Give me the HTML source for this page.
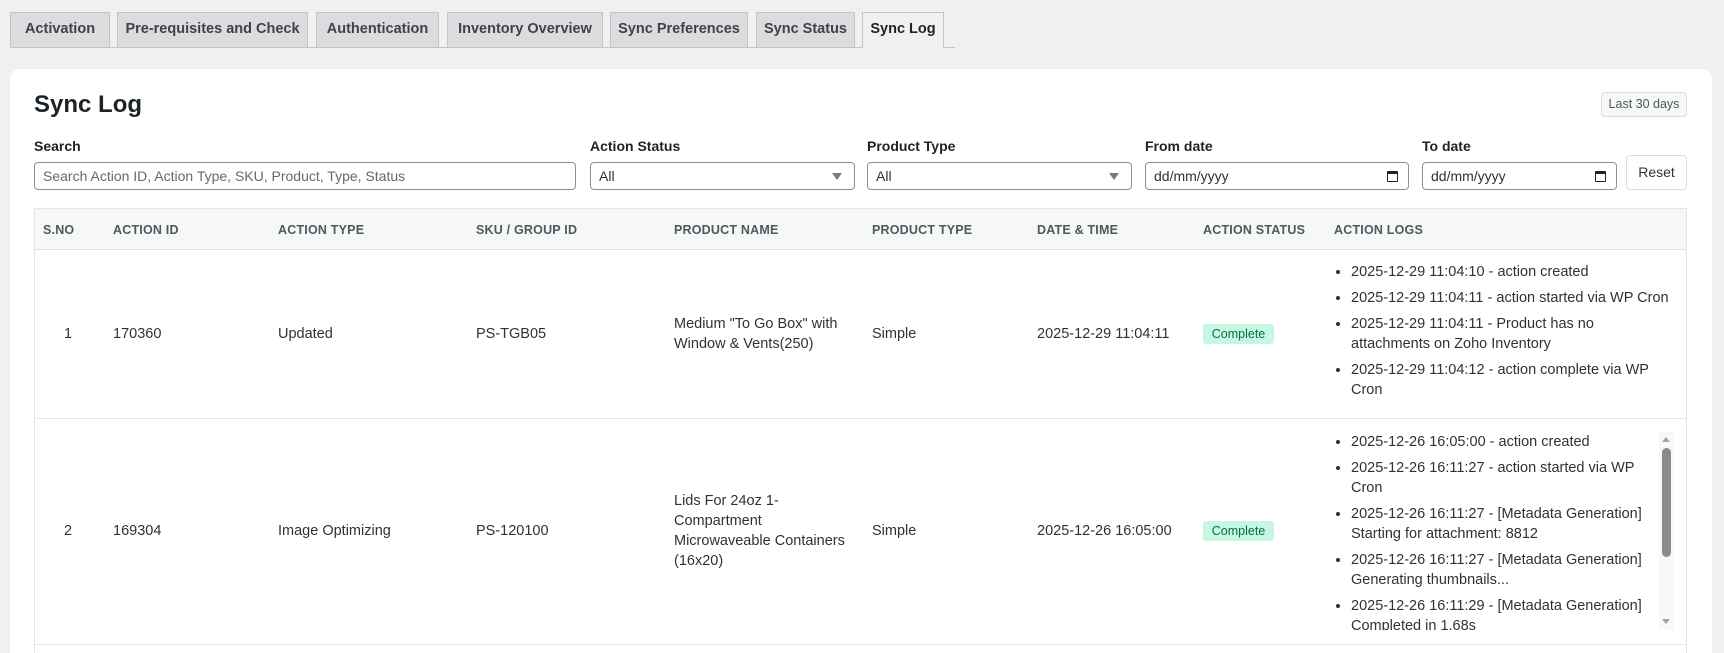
<!DOCTYPE html>
<html><head><meta charset="utf-8"><style>
*{box-sizing:border-box;margin:0;padding:0}
html,body{width:1724px;height:653px;overflow:hidden}
body{background:#f0f0f1;font-family:"Liberation Sans",sans-serif;color:#2c3338;position:relative}
.a{position:absolute}
.tab{position:absolute;top:12px;height:35px;background:#dcdcde;border:1px solid #c3c4c7;border-bottom:none;font-size:14.5px;font-weight:bold;color:#3c434a;line-height:33px;text-align:center}
.tab.on{background:#f0f0f1;color:#1d2327;height:36px}
.line{position:absolute;left:10px;width:945px;top:47px;border-top:1px solid #c3c4c7}
.card{position:absolute;left:10px;top:69px;width:1702px;height:584px;background:#fff;border-radius:10px 10px 0 0}
.lbl{position:absolute;top:138px;font-size:14px;font-weight:bold;color:#1d2327}
.inp{position:absolute;top:162px;height:28px;border:1px solid #8c8f94;border-radius:4px;font-size:14px;line-height:26px;padding-left:8px;color:#2c3338;background:#fff}
.arr{position:absolute;right:12px;top:10px;width:0;height:0;border-left:5px solid transparent;border-right:5px solid transparent;border-top:7px solid #7a7a7a}
.cal{position:absolute;right:10px;top:8px;width:11px;height:11px;border:1.5px solid #222;border-top-width:3px;border-radius:1px}
.th{position:absolute;top:223px;font-size:12.5px;font-weight:bold;color:#50575e;letter-spacing:.2px}
.td{position:absolute;font-size:14.5px;color:#2c3338;line-height:20px}
.badge{position:absolute;width:71px;height:20px;background:#c6f7e2;color:#0b6b47;border-radius:3px;font-size:12.5px;text-align:center;line-height:20px}
ul{list-style:none;position:absolute;left:1336px;font-size:14.5px;line-height:20px;color:#2c3338}
li{position:relative;padding-left:15px;margin-bottom:6px}
li:before{content:"";position:absolute;left:0;top:8px;width:4px;height:4px;border-radius:50%;background:#2c3338}
</style></head><body>
<div class="tab" style="left:10px;width:100px">Activation</div>
<div class="tab" style="left:117px;width:191px">Pre-requisites and Check</div>
<div class="tab" style="left:316px;width:123px">Authentication</div>
<div class="tab" style="left:447px;width:156px">Inventory Overview</div>
<div class="tab" style="left:610px;width:138px">Sync Preferences</div>
<div class="tab" style="left:756px;width:99px">Sync Status</div>
<div class="line"></div>
<div class="tab on" style="left:862px;width:82px">Sync Log</div>
<div class="card"></div>
<div class="a" style="left:34px;top:91px;font-size:24px;font-weight:bold;color:#1d2327">Sync Log</div>
<div class="a" style="left:1601px;top:92px;width:86px;height:25px;border:1px solid #dcdcde;border-radius:4px;background:#f6f7f7;font-size:12.5px;color:#50575e;text-align:center;line-height:23px">Last 30 days</div>
<div class="lbl" style="left:34px">Search</div>
<div class="lbl" style="left:590px">Action Status</div>
<div class="lbl" style="left:867px">Product Type</div>
<div class="lbl" style="left:1145px">From date</div>
<div class="lbl" style="left:1422px">To date</div>
<div class="inp" style="left:34px;width:542px;color:#646970">Search Action ID, Action Type, SKU, Product, Type, Status</div>
<div class="inp" style="left:590px;width:265px">All<span class="arr"></span></div>
<div class="inp" style="left:867px;width:265px">All<span class="arr"></span></div>
<div class="inp" style="left:1145px;width:264px">dd/mm/yyyy<span class="cal"></span></div>
<div class="inp" style="left:1422px;width:195px">dd/mm/yyyy<span class="cal"></span></div>
<div class="a" style="left:1626px;top:155px;width:61px;height:35px;border:1px solid #dcdcde;border-radius:4px;font-size:14px;text-align:center;line-height:33px;color:#2c3338">Reset</div>
<div class="a" style="left:34px;top:208px;width:1653px;height:445px;border:1px solid #e5e5e5;border-bottom:none"></div>
<div class="a" style="left:35px;top:209px;width:1651px;height:41px;background:#f6f7f7;border-bottom:1px solid #e2e4e7"></div>
<div class="th" style="left:43px">S.NO</div>
<div class="th" style="left:113px">ACTION ID</div>
<div class="th" style="left:278px">ACTION TYPE</div>
<div class="th" style="left:476px">SKU / GROUP ID</div>
<div class="th" style="left:674px">PRODUCT NAME</div>
<div class="th" style="left:872px">PRODUCT TYPE</div>
<div class="th" style="left:1037px">DATE &amp; TIME</div>
<div class="th" style="left:1203px">ACTION STATUS</div>
<div class="th" style="left:1334px">ACTION LOGS</div>
<div class="a" style="left:35px;top:418px;width:1651px;border-top:1px solid #e5e5e5"></div>
<div class="a" style="left:35px;top:644px;width:1651px;border-top:1px solid #e5e5e5"></div>
<div class="td" style="left:64px;top:324px">1</div>
<div class="td" style="left:113px;top:324px">170360</div>
<div class="td" style="left:278px;top:324px">Updated</div>
<div class="td" style="left:476px;top:324px">PS-TGB05</div>
<div class="td" style="left:674px;top:314px;width:180px">Medium "To Go Box" with Window &amp; Vents(250)</div>
<div class="td" style="left:872px;top:324px">Simple</div>
<div class="td" style="left:1037px;top:324px">2025-12-29 11:04:11</div>
<div class="badge" style="left:1203px;top:324px">Complete</div>
<ul style="top:262px;width:340px">
<li>2025-12-29 11:04:10 - action created</li>
<li>2025-12-29 11:04:11 - action started via WP Cron</li>
<li>2025-12-29 11:04:11 - Product has no attachments on Zoho Inventory</li>
<li>2025-12-29 11:04:12 - action complete via WP Cron</li>
</ul>
<div class="td" style="left:64px;top:521px">2</div>
<div class="td" style="left:113px;top:521px">169304</div>
<div class="td" style="left:278px;top:521px">Image Optimizing</div>
<div class="td" style="left:476px;top:521px">PS-120100</div>
<div class="td" style="left:674px;top:491px;width:180px">Lids For 24oz 1-<br>Compartment<br>Microwaveable Containers<br>(16x20)</div>
<div class="td" style="left:872px;top:521px">Simple</div>
<div class="td" style="left:1037px;top:521px">2025-12-26 16:05:00</div>
<div class="badge" style="left:1203px;top:521px">Complete</div>
<div class="a" style="left:1330px;top:432px;width:345px;height:198px;overflow:hidden">
<ul style="left:6px;top:0;width:316px">
<li>2025-12-26 16:05:00 - action created</li>
<li>2025-12-26 16:11:27 - action started via WP Cron</li>
<li>2025-12-26 16:11:27 - [Metadata Generation] Starting for attachment: 8812</li>
<li>2025-12-26 16:11:27 - [Metadata Generation] Generating thumbnails...</li>
<li>2025-12-26 16:11:29 - [Metadata Generation] Completed in 1.68s</li>
</ul></div>
<div class="a" style="left:1659px;top:432px;width:15px;height:198px;background:#f8f8f8"></div>
<div class="a" style="left:1662px;top:437px;border-left:4px solid transparent;border-right:4px solid transparent;border-bottom:5px solid #a3a3a3"></div>
<div class="a" style="left:1662px;top:448px;width:9px;height:109px;background:#8a8a8a;border-radius:5px"></div>
<div class="a" style="left:1662px;top:619px;border-left:4px solid transparent;border-right:4px solid transparent;border-top:5px solid #a3a3a3"></div>
</body></html>
